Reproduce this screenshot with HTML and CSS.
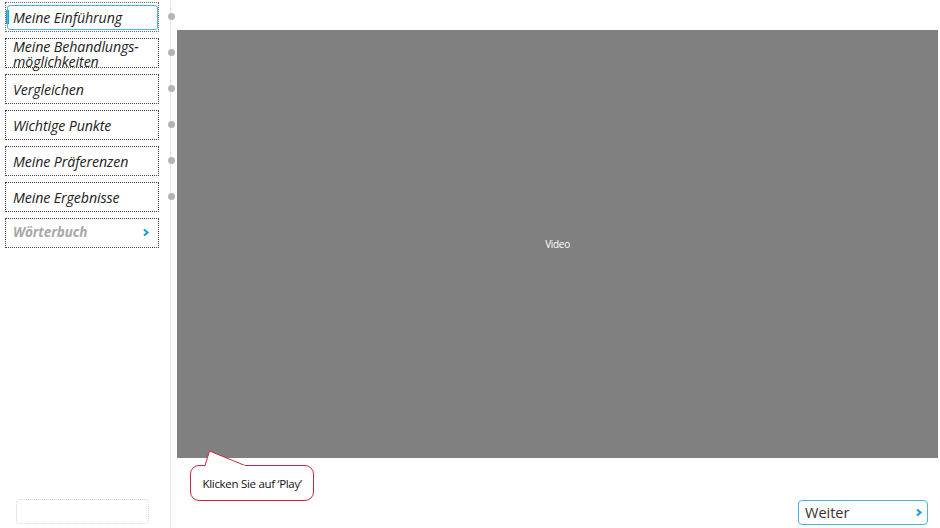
FILE: index.html
```html
<!DOCTYPE html>
<html lang="de">
<head>
<meta charset="utf-8">
<link rel="stylesheet" href="styles.css">
</head>
<body>
<div class="app">
  <aside class="sidebar">
    <nav class="nav">
      <a class="item active dot">Meine Einführung</a>
      <a class="item two dot"><span class="line">Meine Behandlungs-</span><span class="line">möglichkeiten</span></a>
      <a class="item dot">Vergleichen</a>
      <a class="item dot">Wichtige Punkte</a>
      <a class="item dot">Meine Präferenzen</a>
      <a class="item dot">Meine Ergebnisse</a>
      <a class="item dict">Wörterbuch
        <svg class="chev" width="8" height="9" viewBox="0 0 8 9"><path d="M2 1.5 L5.5 4.5 L2 7.5" fill="none" stroke="#1aa3d1" stroke-width="2.2"/></svg>
      </a>
    </nav>
    <div class="spacer"></div>
    <div class="empty-box"></div>
  </aside>
  <main class="main">
    <div class="video"><span>Video</span></div>
    <div class="below">
      <div class="callout">
        <svg class="tail" width="60" height="16" viewBox="0 0 60 16"><path d="M14 15.5 L18.5 1 L54 15.5" fill="#fff" stroke="#c8283e" stroke-width="1"/><rect x="14.6" y="15" width="39" height="2" fill="#fff"/></svg>
        <span>Klicken Sie auf ‘Play’</span>
      </div>
      <div class="footer">
        <button class="next">Weiter
          <svg width="8" height="9" viewBox="0 0 8 9"><path d="M2 1.5 L5.5 4.5 L2 7.5" fill="none" stroke="#1aa3d1" stroke-width="2.2"/></svg>
        </button>
      </div>
    </div>
  </main>
</div>
</body>
</html>
```
FILE: styles.css
```css
* { box-sizing: border-box; }
html, body { margin: 0; padding: 0; background: #fff; }
body { width: 940px; height: 528px; overflow: hidden; font-family: "Open Sans", "DejaVu Sans", sans-serif; }
.app { display: flex; height: 528px; }
.sidebar {
  width: 171px;
  border-right: 1px solid #e4e4e4;
  display: flex;
  flex-direction: column;
  padding: 2px 0 4px 0;
}
.nav { display: flex; flex-direction: column; gap: 6px; padding-left: 5px; }
.item {
  position: relative;
  width: 154px;
  height: 30px;
  border: 1px dotted #444;
  display: flex;
  align-items: center;
  padding-left: 7px;
  font-style: italic;
  font-size: 14.2px;
  color: #222;
  letter-spacing: -0.1px;
  text-decoration: none;
  white-space: nowrap;
}
.item.two {
  flex-direction: column;
  align-items: flex-start;
  justify-content: center;
  padding-top: 1px;
}
.item.two .line { display: block; height: 15px; line-height: 15px; }
.item.active {
  border: 1px dotted #666;
  background: linear-gradient(#1aa3d1, #1aa3d1) no-repeat 0 7px / 3px 14px;
}
.item.active::before {
  content: "";
  position: absolute;
  left: 1px; top: 2px; right: 0px; bottom: 1px;
  border: 1px solid #4ab8de;
  border-radius: 3px;
}
.dot::after {
  content: "";
  position: absolute;
  right: -17px;
  top: 50%;
  width: 7px; height: 7px;
  margin-top: -4px;
  border-radius: 50%;
  background: #b4b4b4;
}
.dict {
  color: #a8a8a8;
  font-weight: 700;
  font-size: 13.5px;
  justify-content: space-between;
  padding-right: 8px;
  padding-bottom: 2px;
}
.spacer { flex: 1; }
.empty-box {
  margin-left: 16px;
  width: 133px;
  height: 25px;
  border: 1px dotted #d4d4d4;
  border-radius: 4px;
}
.main { flex: 1; display: flex; flex-direction: column; padding: 30px 2px 0 6px; }
.video {
  height: 428px;
  background: #808080;
  display: flex;
  align-items: center;
  justify-content: center;
  color: #fff;
  font-size: 10px;
  letter-spacing: -0.3px;
}
.below { flex: 1; display: flex; flex-direction: column; }
.callout {
  position: relative;
  margin-top: 7px;
  margin-left: 13px;
  width: 124px;
  height: 36px;
  border: 1px solid #c8283e;
  border-radius: 9px;
  display: flex;
  align-items: center;
  justify-content: center;
  font-size: 11.5px;
  letter-spacing: -0.3px;
  color: #111;
}
.tail { position: absolute; left: 0; top: -16px; }
.footer { display: flex; justify-content: flex-end; padding-right: 10px; margin-top: -1px; }
.next {
  width: 130px;
  height: 25px;
  border: 1px solid #4ab8de;
  border-radius: 4px;
  background: #fff;
  display: flex;
  align-items: center;
  justify-content: space-between;
  padding: 0 4px 0 6px;
  font-family: "Open Sans", sans-serif;
  font-size: 14.5px;
  color: #333;
}
```
